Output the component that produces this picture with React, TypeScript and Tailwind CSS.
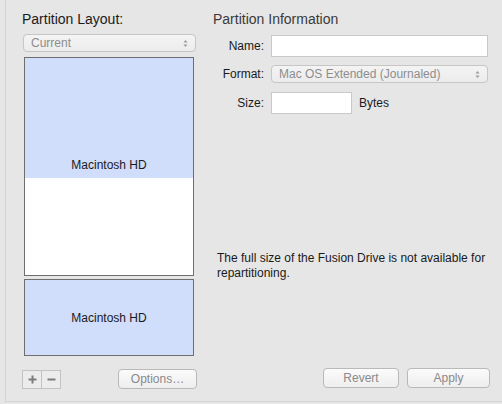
import React from "react";

const font = { fontFamily: '"Liberation Sans", Arial, sans-serif' };

function Arrows() {
  return (
    <svg width="5" height="9" viewBox="0 0 5 9" className="shrink-0">
      <path d="M0.5 3.5 L2.5 1 L4.5 3.5 Z" fill="#9a9a9a" />
      <path d="M0.5 5.5 L2.5 8 L4.5 5.5 Z" fill="#9a9a9a" />
    </svg>
  );
}

function Btn({ children, w }: { children: React.ReactNode; w: string }) {
  return (
    <div
      className={`${w} h-[20px] rounded-[4px] border border-[#b9b9b9] bg-gradient-to-b from-[#fbfbfb] to-[#eeeeee] flex items-center justify-center text-[12px] text-[#8a8a8a]`}
    >
      {children}
    </div>
  );
}

export default function App() {
  return (
    <div className="w-[502px] h-[404px] bg-[#e6e6e6] overflow-hidden" style={font}>
      <div className="ml-[5px] w-[497px] h-[402px] border-l border-b border-[#d3d3d3] flex">
        {/* Left column */}
        <div className="ml-[16px] w-[175px] flex flex-col">
          <div className="mt-[11px] h-[17px] text-[14px] leading-[17px] text-[#1a1a1a]">Partition Layout:</div>
          <div className="mt-[6px] ml-[1px] w-[173px] h-[18px] rounded-[4px] border border-[#c6c6c6] bg-gradient-to-b from-[#f4f4f4] to-[#ececec] flex items-center justify-between pl-[7px] pr-[7px] text-[12px] text-[#8d8d8d]">
            <span>Current</span>
            <Arrows />
          </div>
          <div className="mt-[5px] ml-[2px] w-[170px] h-[219px] border border-[#6e6e6e] flex flex-col bg-white">
            <div className="h-[120px] bg-[#d0ddfb] flex items-end justify-center pb-[4px] text-[12px] text-[#1a1a1a]">
              Macintosh HD
            </div>
          </div>
          <div className="mt-[3px] ml-[2px] w-[170px] h-[77px] border border-[#6e6e6e] bg-[#d0ddfb] flex items-center justify-center text-[12px] text-[#1a1a1a]">
            Macintosh HD
          </div>
          <div className="mt-[13px] flex items-center">
            <div className="w-[39px] h-[19px] border border-[#c3c3c3] bg-[#ececec] flex">
              <div className="w-[19px] h-full border-r border-[#c3c3c3] flex items-center justify-center">
                <svg width="9" height="9" viewBox="0 0 9 9">
                  <path d="M4.5 0.5 V8.5 M0.5 4.5 H8.5" stroke="#7c7c7c" strokeWidth="2" />
                </svg>
              </div>
              <div className="flex-1 flex items-center justify-center">
                <svg width="9" height="9" viewBox="0 0 9 9">
                  <path d="M0.5 4.5 H8.5" stroke="#7c7c7c" strokeWidth="2" />
                </svg>
              </div>
            </div>
            <div className="ml-[57px]">
              <Btn w="w-[79px]">Options…</Btn>
            </div>
          </div>
        </div>

        {/* Right column */}
        <div className="ml-[16px] w-[276px] flex flex-col">
          <div className="mt-[11px] h-[17px] text-[14px] leading-[17px] text-[#3a3a3a]">Partition Information</div>
          <div className="mt-[7px] flex items-center h-[22px]">
            <div className="w-[51px] text-right text-[12px] text-[#1a1a1a]">Name:</div>
            <div className="ml-[7px] w-[217px] h-[22px] bg-white border border-[#c9c9c9]" />
          </div>
          <div className="mt-[8px] flex items-center h-[18px]">
            <div className="w-[51px] text-right text-[12px] text-[#1a1a1a]">Format:</div>
            <div className="ml-[7px] w-[217px] h-[18px] rounded-[4px] border border-[#c6c6c6] bg-gradient-to-b from-[#f4f4f4] to-[#ececec] flex items-center justify-between pl-[7px] pr-[7px] text-[12px] text-[#8d8d8d]">
              <span>Mac OS Extended (Journaled)</span>
              <Arrows />
            </div>
          </div>
          <div className="mt-[9px] flex items-center h-[22px]">
            <div className="w-[51px] text-right text-[12px] text-[#1a1a1a]">Size:</div>
            <div className="ml-[7px] w-[81px] h-[22px] bg-white border border-[#c9c9c9]" />
            <div className="ml-[7px] text-[12px] text-[#1a1a1a]">Bytes</div>
          </div>
          <div className="mt-[137px] ml-[4px] w-[275px] text-[12px] leading-[15px] text-[#1a1a1a]">
            The full size of the Fusion Drive is not available for repartitioning.
          </div>
          <div className="mt-auto mb-[13px] flex">
            <div className="ml-[110px]">
              <Btn w="w-[76px]">Revert</Btn>
            </div>
            <div className="ml-[8px]">
              <Btn w="w-[83px]">Apply</Btn>
            </div>
          </div>
        </div>
      </div>
    </div>
  );
}
